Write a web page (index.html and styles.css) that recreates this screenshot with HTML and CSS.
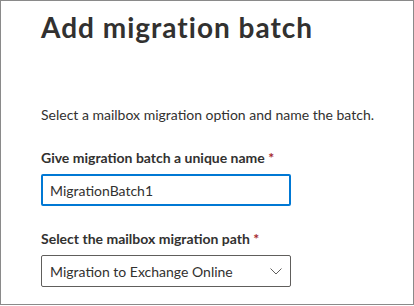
FILE: index.html
```html
<!DOCTYPE html>
<html lang="en">
<head>
    <meta charset="UTF-8">
    <title>Add migration batch</title>
    <link rel="stylesheet" href="styles.css">
</head>
<body>
    <div class="panel">
        <h1 class="title">Add migration batch</h1>
        <p class="intro">Select a mailbox migration option and name the batch.</p>

        <div class="field">
            <label class="label" for="batchname">Give migration batch a unique name <span class="req">*</span></label>
            <input type="text" id="batchname" class="textbox" value="MigrationBatch1">
        </div>

        <div class="field">
            <label class="label">Select the mailbox migration path <span class="req">*</span></label>
            <div class="dropdown">
                <span>Migration to Exchange Online</span>
                <svg width="12" height="7" viewBox="0 0 12 7"><path d="M0.5 0.5 L6 6 L11.5 0.5" fill="none" stroke="#605e5c" stroke-width="1"/></svg>
            </div>
        </div>
    </div>
</body>
</html>
```

FILE: styles.css
```css
*{
    box-sizing: border-box;
}
body{
    margin: 0;
    background-color: white;
    font-family: 'Segoe UI', 'Lato', sans-serif;
    color: #323130;
}
.panel{
    width: 414px;
    height: 305px;
    border: 1px solid #8a8a8a;
    padding: 8px 0 0 40px;
}
.title{
    margin: 0;
    font-size: 28px;
    line-height: 36px;
    font-weight: 700;
    letter-spacing: 1px;
}
.intro{
    margin: 60px 0 0 0;
    font-size: 14px;
    line-height: 20px;
}
.field{
    margin-top: 23px;
}
.label{
    display: block;
    font-size: 14px;
    font-weight: 700;
    line-height: 20px;
    margin-bottom: 6px;
}
.req{
    color: #a4262c;
}
.textbox{
    display: block;
    width: 250px;
    height: 32px;
    border: 2px solid #0078d4;
    border-radius: 2px;
    padding: 0 7px;
    font-family: inherit;
    font-size: 14px;
    color: #323130;
    outline: none;
}
.dropdown{
    width: 250px;
    height: 32px;
    border: 1px solid #605e5c;
    border-radius: 2px;
    padding: 0 8px 0 8px;
    font-size: 14px;
    display: flex;
    align-items: center;
    justify-content: space-between;
}
```
